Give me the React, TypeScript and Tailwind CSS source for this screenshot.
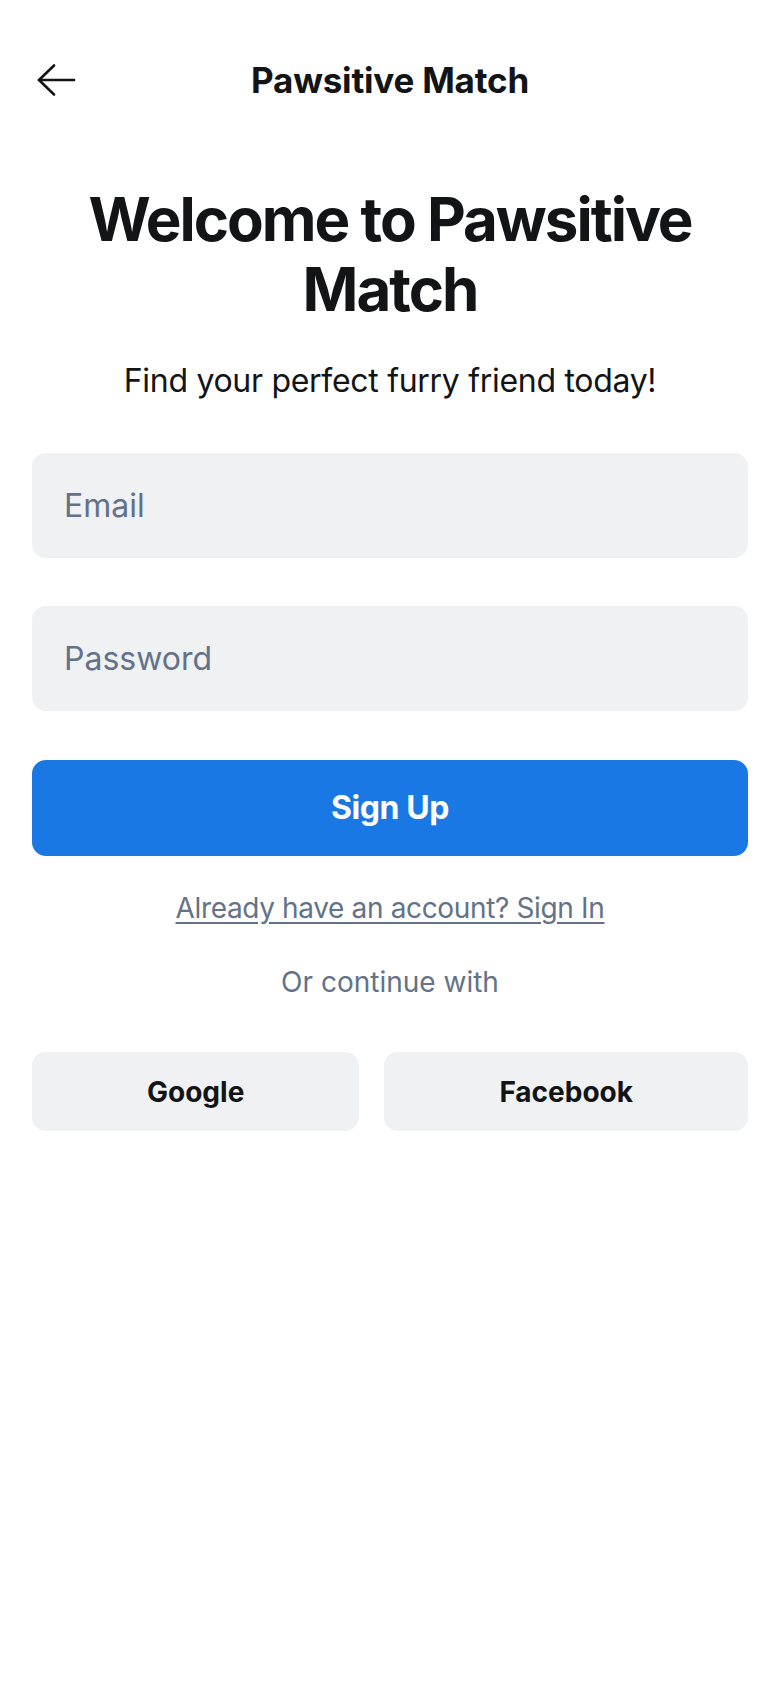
import { useState } from 'react'

const font = { fontFamily: 'Inter, "Noto Sans", sans-serif' }

function BackArrow() {
  return (
    <svg width="40" height="32" viewBox="0 0 40 32" fill="none" stroke="#121416" strokeWidth="2.6" strokeLinecap="round" strokeLinejoin="round">
      <path d="M38 16H3" />
      <path d="M18 1.5L3 16l15 14.5" />
    </svg>
  )
}

export default function App() {
  const [email, setEmail] = useState('')
  const [password, setPassword] = useState('')

  return (
    <div className="min-h-[1688px] w-[780px] bg-white text-[#121416]" style={font}>
      {/* Top bar */}
      <header className="flex h-[64px] items-center px-[36px] mt-[48px]">
        <button className="flex w-[48px] items-center">
          <BackArrow />
        </button>
        <h1 className="flex-1 pr-[48px] text-center text-[35px] font-bold tracking-[-0.2px]">Pawsitive Match</h1>
      </header>

      <main className="flex flex-col px-[32px]">
        <h2 className="mt-[72px] text-center text-[60px] font-bold leading-[70px] tracking-[-2px]">
          Welcome to Pawsitive
          <br />
          Match
        </h2>
        <p className="mt-[33px] text-center text-[32px] tracking-[-0.3px]">Find your perfect furry friend today!</p>

        <div className="mt-[48px] flex flex-col gap-[48px]">
          <input
            value={email}
            onChange={(e) => setEmail(e.target.value)}
            placeholder="Email"
            className="h-[105px] w-full rounded-[14px] bg-[#f0f1f3] px-[32px] text-[32px] text-[#121416] outline-none placeholder:text-[#637288]"
          />
          <input
            type="password"
            value={password}
            onChange={(e) => setPassword(e.target.value)}
            placeholder="Password"
            className="h-[105px] w-full rounded-[14px] bg-[#f0f1f3] px-[32px] text-[32px] text-[#121416] outline-none placeholder:text-[#637288]"
          />
        </div>

        <button className="mt-[49px] h-[96px] w-full rounded-[14px] bg-[#1a78e5] text-[32px] font-bold tracking-[-0.4px] text-white">
          Sign Up
        </button>

        <a href="#" className="mt-[31px] self-center text-[28px] tracking-[-0.35px] text-[#637288] underline underline-offset-[4px]">
          Already have an account? Sign In
        </a>

        <p className="mt-[32px] text-center text-[28px] text-[#637288]">Or continue with</p>

        <div className="mt-[49px] flex gap-[25px]">
          <button className="h-[79px] flex-auto rounded-[14px] bg-[#f0f1f3] text-[28px] font-bold">Google</button>
          <button className="h-[79px] flex-auto rounded-[14px] bg-[#f0f1f3] text-[28px] font-bold">Facebook</button>
        </div>
      </main>
    </div>
  )
}
